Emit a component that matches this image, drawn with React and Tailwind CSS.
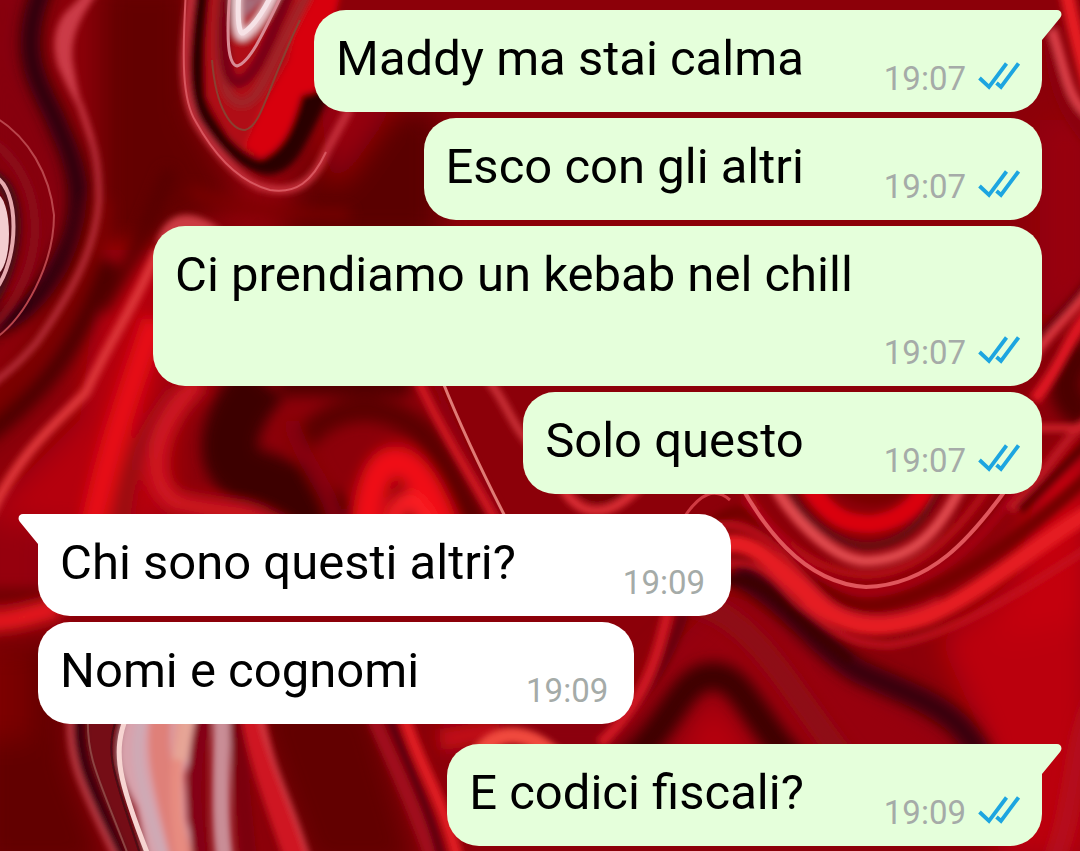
const MESSAGES = [
  { id: 1, text: "Maddy ma stai calma", time: "19:07", mine: true, first: true },
  { id: 2, text: "Esco con gli altri", time: "19:07", mine: true },
  { id: 3, text: "Ci prendiamo un kebab nel chill", time: "19:07", mine: true },
  { id: 4, text: "Solo questo", time: "19:07", mine: true },
  { id: 5, text: "Chi sono questi altri?", time: "19:09", mine: false, first: true },
  { id: 6, text: "Nomi e cognomi", time: "19:09", mine: false },
  { id: 7, text: "E codici fiscali?", time: "19:09", mine: true, first: true },
];

// Large patches of light and shade: [path, fill]
const PATCHES = [
  ["M100 -20H190V110L240 200L160 240L100 300Z", "#640004"],
  ["M-20 -20H30L20 60L60 130L70 210L50 280L-20 300Z", "#86000f"],
  ["M330 110H440V240H280Z", "#5a0003"],
  ["M320 100H400L350 170L330 190Z", "#960008"],
  ["M100 250H170V530H-20V520L80 420Z", "#b50510"],
  ["M1040 120H1090V290L1040 330Z", "#98000d"],
  ["M940 640L1000 590L1090 510V860H1000L985 740Z", "#bb0510"],
  ["M1040 480L1090 440V620L1000 640Z", "#c4000d"],
  ["M730 590L830 660L960 740L980 780H640V680Z", "#970010"],
  ["M680 760L712 700L760 770Z", "#b8000f"],
  ["M-20 520H40V610H-20Z", "#96000a"],
  ["M-20 640H60L70 760L110 870H-20Z", "#620004"],
  ["M-20 650H30V740H-20Z", "#7c0006"],
  ["M250 700H370L420 870H310Z", "#620006"],
  ["M440 700H640V760H440Z", "#8b0008"],
];

// Wide, blurred folds: [path, colour, stroke width]
const WIDE_FOLDS = [
  ["M46 -20C10 60 46 90 60 130C84 180 84 220 62 260C40 300 20 320 -20 330", "#2a0008", 20],
  ["M100 200C96 260 60 330 -20 420", "#7a0005", 26],
  ["M110 260C80 340 50 390 -20 440", "#4a0003", 18],
  ["M170 170C150 220 130 270 100 310", "#560004", 14],
  ["M190 190C220 206 290 216 350 214", "#7c0006", 10],
  ["M154 320C120 420 105 460 90 540", "#e80f19", 24],
  ["M176 390C136 440 124 480 122 540", "#960d16", 14],
  ["M200 380C150 430 145 480 175 502C220 515 270 512 330 530", "#d01520", 20],
  ["M262 380C220 430 222 466 250 476C290 486 320 510 350 540", "#3c0004", 56],
  ["M280 384H410", "#500003", 24],
  ["M296 450C330 400 380 400 420 430C440 450 460 500 480 530", "#5a0003", 24],
  ["M290 420C310 480 330 480 340 540", "#860009", 16],
  ["M366 540C368 440 412 430 448 540", "#f01018", 30],
  ["M392 540C394 490 412 484 436 540", "#ff2226", 16],
  ["M620 770C670 730 680 676 712 676C745 676 750 720 810 780", "#3c0005", 28],
  ["M680 600C760 610 790 700 870 790", "#8e0812", 24],
  ["M735 572C790 600 820 650 860 672C920 700 970 710 990 780", "#38000a", 24],
  ["M1090 350C1060 360 1056 410 1090 412", "#4c0004", 32],
  ["M1100 690C1070 740 1080 800 1050 870", "#b41420", 14],
  ["M-20 596H60", "#6a0005", 14],
  ["M-20 622C20 622 30 614 60 608", "#ee1a20", 18],
  ["M440 740L500 730", "#c30a15", 22],
];

const FOLDS = [
  // top left ribbon
  ["M90 -10C50 40 52 55 80 105C94 145 99 160 99 200C96 250 70 295 37 342C20 362 10 370 -10 386", "#bb323c", 6],
  ["M94 -14L66 14C54 30 54 50 60 68L80 104L92 140C80 110 76 90 72 66C68 46 72 24 98 -10Z", "#cb3a46", 3, "#cb3a46"],
  ["M-10 176C20 184 24 250 -10 304", "#4a0a12", 14],
  ["M-10 140C50 180 50 270 -10 330", "#8c101c", 8],
  // drop at the top
  ["M206 -10L208 96L236 146L262 160L285 150L318 84L330 -10Z", "#b00c18", 4, "#b00c18"],
  ["M300 -10L290 60L262 110L246 146L266 160L290 144L320 80L340 -10Z", "#d80610", 2, "#d80610"],
  ["M203 -10C196 60 194 100 206 118C224 146 246 166 268 168C290 168 298 146 324 92", "#2a0206", 13],
  ["M262 168C286 168 296 148 324 92L304 98C294 134 284 152 262 162Z", "#2a0206", 6, "#2a0206"],
  ["M192 -10C183 50 180 90 197 123C218 156 244 182 262 187C296 196 314 182 327 150L350 108", "#c8333c", 8],
  ["M222 -10C214 70 224 104 243 103C262 100 268 66 310 -10", "#a02428", 11],
  ["M227 -10C220 60 228 84 240 82C256 76 268 46 290 -10", "#780313", 12],
  ["M237 -10C236 24 238 37 243 36C254 30 264 16 276 -10", "#f3d9de", 9],
  ["M246 -10L247 10L266 -10", "#a4707e", 8],
  // upper folds behind the third bubble
  ["M160 240C170 214 190 212 214 228Z", "#cb3a42", 6, "#cb3a42"],
  ["M158 250C135 306 110 340 86 392C60 420 20 450 -10 516", "#dc3438", 10],
  ["M418 380C440 430 480 490 506 540", "#d01724", 9],
  ["M434 380C460 440 480 480 516 540", "#900010", 5],
  ["M488 380C506 400 512 430 540 454", "#cb3038", 8],
  // folds right of the white bubbles
  ["M560 484C580 520 610 520 642 484", "#dc2e36", 9],
  ["M574 484C590 504 610 504 628 484", "#6e0005", 8],
  ["M700 540C730 500 750 505 781 543C820 590 840 606 870 606C930 600 1010 550 1100 466", "#740006", 13],
  ["M700 560C740 520 770 560 814 602C850 630 880 632 925 617C980 595 1040 540 1100 506", "#e51a22", 17],
  ["M700 576C750 545 770 575 796 602C830 630 850 645 888 645C940 640 1010 600 1100 540", "#c41820", 6],
  ["M700 590C750 565 770 590 814 632L851 661", "#3e0005", 9],
  ["M700 530C760 506 790 570 830 602C860 624 900 620 940 600", "#ca1822", 5],
  ["M774 484C785 510 830 560 866 561C914 560 940 530 962 484", "#e04a4e", 11],
  ["M788 484C800 520 840 545 866 546C905 545 925 520 940 484", "#641014", 7],
  ["M808 484C830 520 850 524 870 524C895 522 915 510 928 484", "#d90610", 18],
  ["M836 484C860 504 886 504 906 484", "#7c0005", 12],
  ["M742 484C770 540 820 574 866 575C920 574 960 530 990 484", "#b40a14", 8],
  ["M1020 484C980 550 920 590 866 592C820 590 780 540 744 500", "#a80612", 7],
  ["M1100 410C1060 440 1050 470 1010 510", "#bb1620", 10],
  ["M1100 430C1080 450 1060 470 1020 510", "#5a0005", 9],
  // right edge
  ["M1050 20C1054 80 1060 110 1100 150", "#8b0008", 16],
  ["M1052 30C1064 60 1066 100 1090 116", "#dd4048", 9],
  ["M1066 -10C1074 30 1082 60 1090 90", "#e51b24", 14],
  ["M1100 262C1080 300 1050 320 1030 350", "#6a0007", 9],
  ["M1100 274C1080 308 1050 330 1030 362", "#dd3840", 8],
  ["M1100 300C1070 330 1060 370 1034 400", "#df1420", 12],
  ["M1036 428H1100", "#d0202a", 7],
  // between the second white bubble and the last one
  ["M620 718C650 690 668 660 684 612", "#6b0007", 12],
  ["M600 744C646 700 656 660 668 612", "#cf1822", 11],
  ["M480 752C500 728 530 730 560 760", "#f04a3c", 16],
  // bottom left shell
  ["M88 715C78 760 96 800 120 870L150 870L120 775L116 745L130 715Z", "#740812", 4, "#740812"],
  ["M80 715C76 760 94 790 122 856", "#35000a", 10],
  ["M70 715C68 764 84 790 118 862", "#bd3d47", 6],
  ["M127 715C114 750 118 770 137 807L152 870H198L186 820L184 775L202 715Z", "#d8a2ac", 2, "#d8a2ac"],
  ["M164 700C150 760 170 800 184 870", "#df8079", 22],
  ["M184 710C176 760 172 800 184 870", "#e78c80", 12],
  ["M190 700L180 760", "#e6a596", 14],
  ["M142 720C130 755 142 790 164 860", "#cdaab6", 9],
  ["M206 710C190 770 196 820 202 870", "#840512", 16],
  ["M222 710C222 770 218 820 226 870", "#c98d96", 18],
  ["M238 710C238 770 246 820 250 870", "#7b0009", 16],
  ["M252 710C262 770 280 810 300 870", "#cf1420", 24],
  ["M258 710C272 770 296 810 312 870", "#d04048", 4],
  ["M370 710C396 770 416 810 436 870", "#a00d1d", 14],
  ["M386 710C410 770 430 810 444 870", "#5b0007", 8],
  ["M402 710C420 770 440 790 458 860", "#df1b20", 12],
];

const THREADS = [
  ["M-10 114C30 136 50 176 54 215C54 262 26 320 -10 342", "#b9454c", 2],
  ["M-6 176C20 188 20 260 -6 292", "#e6a9ae", 4],
  ["M186 -10C182 60 182 100 196 122C216 158 240 182 270 190C296 194 312 182 326 152", "#d8565e", 2],
  ["M230 -10C226 40 228 64 237 66C250 62 262 36 284 -10", "#d98a94", 3],
  ["M212 60C216 110 232 130 245 130C262 126 266 90 300 20", "#8a4030", 2],
  ["M442 380C462 430 486 480 512 530", "#e07a74", 3],
  ["M680 524C700 490 716 488 730 500", "#cf3a42", 3],
  ["M740 484C760 520 800 583 866 587C930 585 970 540 1010 484", "#e0565b", 4],
  ["M88 715C86 760 100 780 130 860", "#8c4442", 2],
  ["M118 715C102 752 116 780 142 860", "#4c0a12", 2],
  ["M127 715C112 752 118 780 150 860", "#f7d5d2", 5],
];

const drawFold = ([d, stroke, width, fill = "none"]) => (
  <path key={d} d={d} stroke={stroke} strokeWidth={width} fill={fill} />
);

function Wallpaper() {
  return (
    <svg
      className="absolute inset-0 -z-10 h-full w-full"
      viewBox="0 0 1080 851"
      preserveAspectRatio="xMidYMid slice"
      aria-hidden="true"
    >
      <defs>
        <filter id="patch" x="-20%" y="-20%" width="140%" height="140%">
          <feGaussianBlur stdDeviation="14" />
        </filter>
        <filter id="soft" x="-20%" y="-20%" width="140%" height="140%">
          <feGaussianBlur stdDeviation="7" />
        </filter>
        <filter id="smooth" x="-20%" y="-20%" width="140%" height="140%">
          <feGaussianBlur stdDeviation="3" />
        </filter>
        <filter id="fine" x="-20%" y="-20%" width="140%" height="140%">
          <feGaussianBlur stdDeviation="0.7" />
        </filter>
      </defs>
      <rect width="1080" height="851" fill="#8c0009" />
      <g filter="url(#patch)">
        {PATCHES.map(([d, fill]) => (
          <path key={d} d={d} fill={fill} />
        ))}
      </g>
      <g filter="url(#soft)">{WIDE_FOLDS.map(drawFold)}</g>
      <g filter="url(#smooth)">{FOLDS.map(drawFold)}</g>
      <g filter="url(#fine)">
        <ellipse cx="-4" cy="234" rx="13" ry="40" fill="#f3cdd0" />
        <path d="M239 -10C237 20 239 34 243 33C252 28 262 14 272 -6" fill="none" stroke="#f6e2e6" strokeWidth="5" />
        {THREADS.map(drawFold)}
      </g>
    </svg>
  );
}

function Tail({ mine }) {
  return (
    <svg
      className={`absolute top-0 h-8 w-10 ${mine ? "-right-5 text-[#e5ffdb]" : "-left-5 -scale-x-100 text-white"}`}
      viewBox="0 0 40 32"
      fill="currentColor"
      aria-hidden="true"
    >
      <path d="M0 0H35C39 0 41 4 38 8L20 30V32H0Z" />
    </svg>
  );
}

function ReadTicks() {
  return (
    <svg
      className="mb-1.5 h-7 w-[42px]"
      viewBox="0 0 42 28"
      fill="none"
      stroke="#1da5e0"
      strokeWidth="3.8"
      role="img"
      aria-label="Letto"
    >
      <path d="M1.5 16L11 25L28.5 1.5" />
      <path d="M18.5 21L23 25L40.5 1.5" />
    </svg>
  );
}

function Message({ text, time, mine, first }) {
  return (
    <li className={`flex ${mine ? "justify-end" : "justify-start"} ${first ? "mt-5 first:mt-0" : "mt-1.5"}`}>
      <div
        className={`relative flex max-w-[889px] flex-wrap items-end justify-end rounded-[32px] pt-5 pb-1 pl-[22px] ${
          mine ? "bg-[#e5ffdb] pr-[22px]" : "bg-white pr-[26px]"
        } ${first ? (mine ? "rounded-tr-none" : "rounded-tl-none") : ""}`}
      >
        {first && <Tail mine={mine} />}
        <p className={`relative mb-5 grow text-[49px] leading-[58px] text-black ${mine ? "mr-20" : "mr-[107px]"}`}>
          {text}
        </p>
        <div className="relative flex items-center gap-3 text-[33px] leading-[58px] text-[#a5aba8]">
          <time>{time}</time>
          {mine && <ReadTicks />}
        </div>
      </div>
    </li>
  );
}

export default function App() {
  return (
    <main className="relative isolate min-h-screen overflow-hidden bg-[#8c0009] px-[38px] pt-2.5 pb-[5px] font-['Roboto',sans-serif]">
      <Wallpaper />
      <ul>
        {MESSAGES.map((m) => (
          <Message key={m.id} {...m} />
        ))}
      </ul>
    </main>
  );
}
